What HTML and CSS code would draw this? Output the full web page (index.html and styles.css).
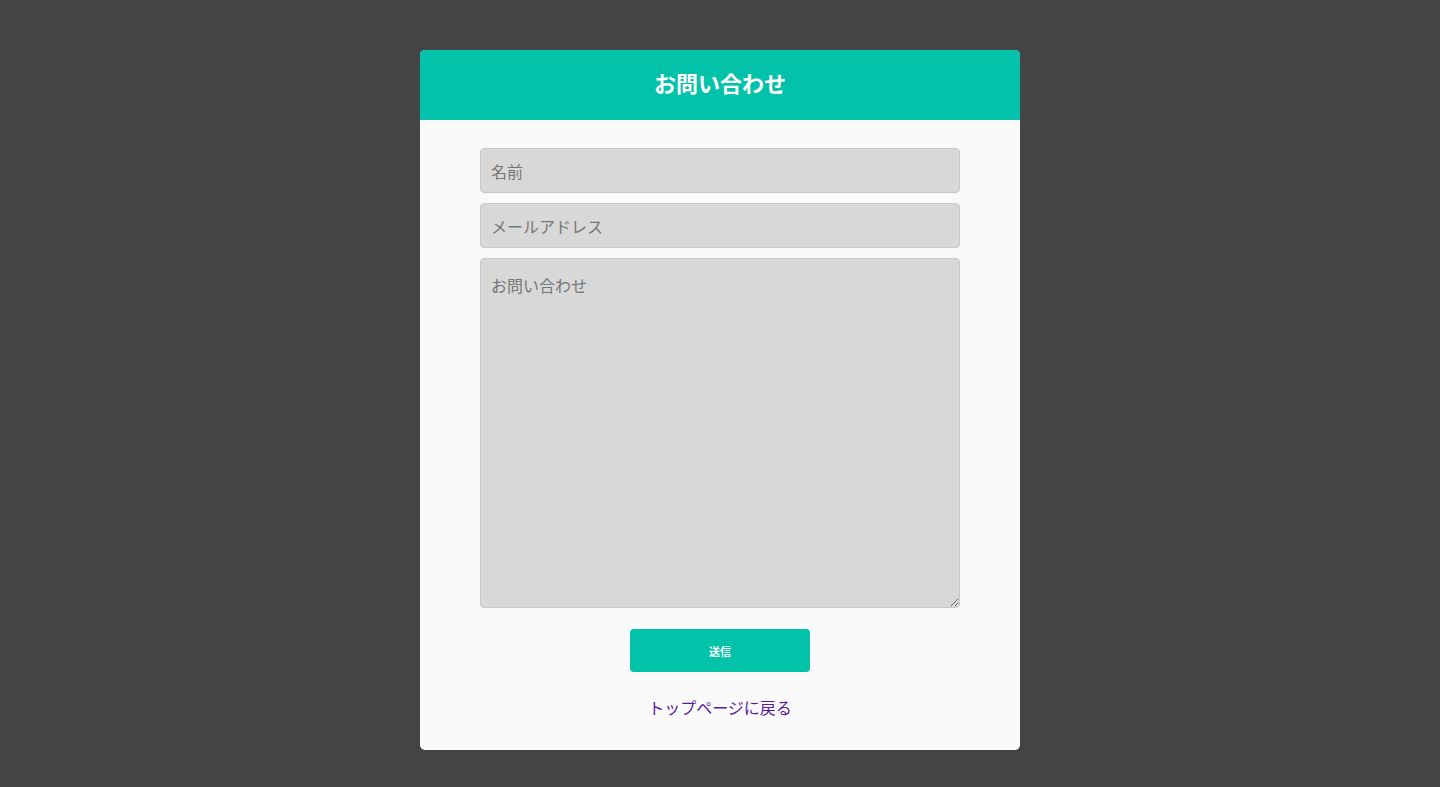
FILE: index.html
```html
<!DOCTYPE html>
<html lang="ja">
<head>
<meta charset="utf-8">
<title>お問い合わせ</title>
<link rel="stylesheet" href="styles.css">
</head>
<body>
<div class="page">
  <div class="card">
    <div class="card-header"><h1 class="title">お問い合わせ</h1></div>
    <form class="form">
      <input class="field" type="text" placeholder="名前">
      <input class="field" type="email" placeholder="メールアドレス">
      <textarea class="field area" placeholder="お問い合わせ"></textarea>
      <button class="submit" type="button">送信</button>
      <a class="back" href="#">トップページに戻る</a>
    </form>
  </div>
</div>
</body>
</html>
```

FILE: styles.css
```css
html, body {
  margin: 0;
  padding: 0;
  background: #444444;
  font-family: "Noto Sans CJK JP", "Noto Sans", sans-serif;
}
.page {
  display: flex;
  justify-content: center;
  padding-top: 50px;
  min-height: 787px;
  box-sizing: border-box;
}
.card {
  width: 600px;
  height: 700px;
  background: #fafafa;
  border-radius: 5px;
  overflow: hidden;
  display: flex;
  flex-direction: column;
}
.card-header {
  height: 70px;
  background: #02c2a9;
  display: flex;
  align-items: center;
  justify-content: center;
}
.title {
  margin: 0 0 6px;
  color: #ffffff;
  font-size: 22px;
  font-weight: 700;
  line-height: 1;
}
.form {
  display: flex;
  flex-direction: column;
  align-items: center;
  padding: 28px 60px 0;
}
.field {
  width: 480px;
  height: 45px;
  box-sizing: border-box;
  margin: 0 0 10px;
  padding: 0 10px;
  background: #d8d8d8;
  border: 1px solid #c8c8c8;
  border-radius: 4px;
  font-family: inherit;
  font-size: 16px;
  color: #333;
  outline: none;
}
.field::placeholder {
  color: #767676;
}
.area {
  height: 350px;
  padding: 16px 10px;
  resize: vertical;
  margin-bottom: 21px;
  line-height: 20px;
}
.submit {
  width: 180px;
  height: 43px;
  background: #02c2a9;
  border: none;
  border-radius: 4px;
  color: #ffffff;
  font-family: inherit;
  font-size: 11px;
  font-weight: 700;
  cursor: pointer;
}
.back {
  margin-top: 24px;
  color: #5b1a9c;
  font-size: 16px;
  line-height: 22px;
  text-decoration: none;
}
```
